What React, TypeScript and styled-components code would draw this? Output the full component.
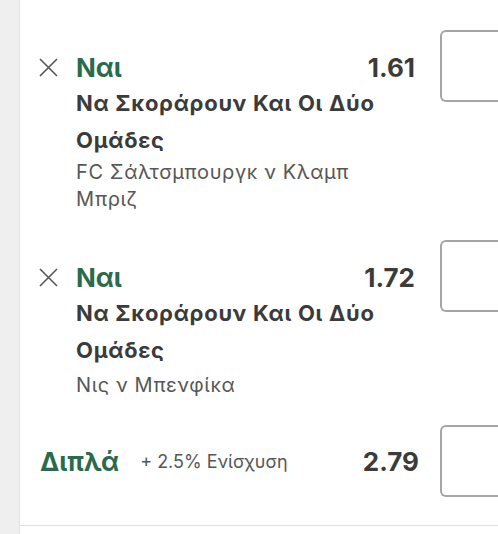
import React from "react";
import styled, { createGlobalStyle } from "styled-components";

const Global = createGlobalStyle`
  html, body { margin: 0; padding: 0; background: #fff; overflow: hidden; }
  body { font-family: Inter, "Noto Sans", sans-serif; -webkit-font-smoothing: antialiased; }
`;

const Page = styled.div`
  display: flex;
  width: 498px;
  height: 534px;
  overflow: hidden;
`;

const Rail = styled.div`
  width: 19px;
  flex: none;
  background: #efefef;
  border-right: 1px solid #e2e2e2;
`;

const Panel = styled.div`
  flex: 1;
  display: flex;
  flex-direction: column;
  min-width: 0;
`;

const List = styled.div`
  display: flex;
  flex-direction: column;
`;

const Selection = styled.div<{ $top: number }>`
  display: flex;
  align-items: flex-start;
  padding-top: ${(p) => p.$top}px;
  margin-right: -22px;
`;

const Info = styled.div`
  flex: 1;
  min-width: 0;
  padding-left: 18px;
`;

const Header = styled.div`
  display: flex;
  align-items: center;
  height: 36px;
`;

const Close = styled.button`
  width: 20px;
  height: 20px;
  margin-right: 18px;
  padding: 0;
  border: none;
  background: none;
  display: flex;
  align-items: center;
  justify-content: center;
  color: #555;
`;

const Pick = styled.span`
  font-size: 26px;
  font-weight: 700;
  color: #2a6b4d;
`;

const Odds = styled.span`
  margin-left: auto;
  font-size: 26px;
  font-weight: 700;
  color: #3b3b3b;
`;

const Body = styled.div`
  padding-left: 38px;
`;

const Market = styled.div`
  font-size: 22px;
  font-weight: 700;
  letter-spacing: 0.7px;
  line-height: 37px;
  color: #3b3b3b;
`;

const Events = styled.div<{ $shift: number }>`
  margin-top: ${(p) => p.$shift}px;
`;

const Event = styled.div`
  font-size: 20px;
  font-weight: 400;
  letter-spacing: 0.6px;
  line-height: 27px;
  color: #575757;
`;

const Stake = styled.div<{ $offset: number; $gap: number }>`
  flex: none;
  width: 80px;
  height: 72px;
  margin-left: ${(p) => p.$gap}px;
  margin-top: ${(p) => p.$offset}px;
  border: 2px solid #a5a5a5;
  border-right: none;
  border-radius: 6px 0 0 6px;
  box-sizing: border-box;
`;

const Multiple = styled.div`
  display: flex;
  align-items: center;
  padding-left: 20px;
  margin-top: 26px;
  margin-right: -22px;
  height: 72px;
  padding-bottom: 28px;
  border-bottom: 1px solid #e2e2e2;
`;

const MultiLabel = styled.span`
  font-size: 26px;
  font-weight: 700;
  color: #2a6b4d;
`;

const Boost = styled.span`
  margin-left: 21px;
  font-size: 18px;
  color: #575757;
`;

const XIcon = () => (
  <svg width="19" height="19" viewBox="0 0 19 19" fill="none">
    <path d="M1 1L18 18M18 1L1 18" stroke="currentColor" strokeWidth="1.6" />
  </svg>
);

type Sel = { odds: string; event: string[]; top: number; shift: number };

const sels: Sel[] = [
  { odds: "1.61", event: ["FC Σάλτσμπουργκ ν Κλαμπ", "Μπριζ"], top: 49, shift: 0 },
  { odds: "1.72", event: ["Νις ν Μπενφίκα"], top: 46, shift: 3 },
];

export default function App() {
  return (
    <>
      <Global />
      <Page>
        <Rail />
        <Panel>
          <List>
            {sels.map((s) => (
              <Selection key={s.odds} $top={s.top}>
                <Info>
                  <Header>
                    <Close aria-label="Αφαίρεση">
                      <XIcon />
                    </Close>
                    <Pick>Ναι</Pick>
                    <Odds>{s.odds}</Odds>
                  </Header>
                  <Body>
                    <Market>Να Σκοράρουν Και Οι Δύο</Market>
                    <Market>Ομάδες</Market>
                    <Events $shift={s.shift}>
                      {s.event.map((e) => (
                        <Event key={e}>{e}</Event>
                      ))}
                    </Events>
                  </Body>
                </Info>
                <Stake $offset={-19} $gap={25} />
              </Selection>
            ))}
          </List>
          <Multiple>
            <MultiLabel>Διπλά</MultiLabel>
            <Boost>+ 2.5% Ενίσχυση</Boost>
            <Odds>2.79</Odds>
            <Stake $offset={0} $gap={21} />
          </Multiple>
        </Panel>
      </Page>
    </>
  );
}
